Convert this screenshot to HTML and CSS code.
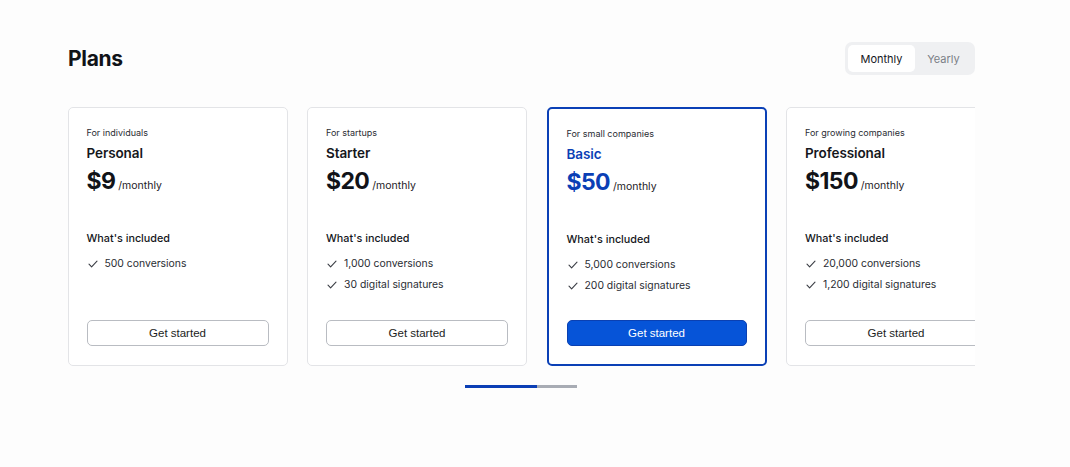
FILE: index.html
```html
<!DOCTYPE html>
<html lang="en">
<head>
<meta charset="utf-8">
<title>Plans</title>
<link rel="stylesheet" href="styles.css">
</head>
<body>
<main class="page">
  <header class="top">
    <h1 class="title">Plans</h1>
    <div class="toggle">
      <span class="seg seg-active">Monthly</span>
      <span class="seg">Yearly</span>
    </div>
  </header>

  <div class="carousel">
    <div class="track">
      <section class="card">
        <p class="tag">For individuals</p>
        <h2 class="name">Personal</h2>
        <p class="price"><span class="amount">$9</span> <span class="per">/monthly</span></p>
        <h3 class="incl">What's included</h3>
        <ul class="feats">
          <li><svg class="chk" viewBox="0 0 10 8"><polyline points="1,4.2 3.6,6.8 9,1.2"/></svg>500 conversions</li>
        </ul>
        <button class="btn">Get started</button>
      </section>

      <section class="card">
        <p class="tag">For startups</p>
        <h2 class="name">Starter</h2>
        <p class="price"><span class="amount">$20</span> <span class="per">/monthly</span></p>
        <h3 class="incl">What's included</h3>
        <ul class="feats">
          <li><svg class="chk" viewBox="0 0 10 8"><polyline points="1,4.2 3.6,6.8 9,1.2"/></svg>1,000 conversions</li>
          <li><svg class="chk" viewBox="0 0 10 8"><polyline points="1,4.2 3.6,6.8 9,1.2"/></svg>30 digital signatures</li>
        </ul>
        <button class="btn">Get started</button>
      </section>

      <section class="card card-featured">
        <p class="tag">For small companies</p>
        <h2 class="name">Basic</h2>
        <p class="price"><span class="amount">$50</span> <span class="per">/monthly</span></p>
        <h3 class="incl">What's included</h3>
        <ul class="feats">
          <li><svg class="chk" viewBox="0 0 10 8"><polyline points="1,4.2 3.6,6.8 9,1.2"/></svg>5,000 conversions</li>
          <li><svg class="chk" viewBox="0 0 10 8"><polyline points="1,4.2 3.6,6.8 9,1.2"/></svg>200 digital signatures</li>
        </ul>
        <button class="btn btn-primary">Get started</button>
      </section>

      <section class="card">
        <p class="tag">For growing companies</p>
        <h2 class="name">Professional</h2>
        <p class="price"><span class="amount">$150</span> <span class="per">/monthly</span></p>
        <h3 class="incl">What's included</h3>
        <ul class="feats">
          <li><svg class="chk" viewBox="0 0 10 8"><polyline points="1,4.2 3.6,6.8 9,1.2"/></svg>20,000 conversions</li>
          <li><svg class="chk" viewBox="0 0 10 8"><polyline points="1,4.2 3.6,6.8 9,1.2"/></svg>1,200 digital signatures</li>
        </ul>
        <button class="btn">Get started</button>
      </section>
    </div>
  </div>

  <div class="dots">
    <span class="bar bar-on"></span><span class="bar"></span>
  </div>
</main>
</body>
</html>
```

FILE: styles.css
```css
* { box-sizing: border-box; }

html, body {
  margin: 0;
  padding: 0;
  background: #fdfdfd;
}

body {
  font-family: "Inter", "Liberation Sans", sans-serif;
  color: #111318;
}

.page {
  width: 907.5px;
  margin-left: 67.5px;
  padding-top: 42px;
}

.top {
  display: flex;
  justify-content: space-between;
  align-items: center;
  height: 33px;
}

.title {
  margin: 0 0 0 0.5px;
  font-size: 21px;
  font-weight: 700;
  letter-spacing: -0.3px;
  line-height: 26px;
}

.toggle {
  display: flex;
  background: #eff0f2;
  border-radius: 7px;
  padding: 3px;
  height: 33px;
}

.seg {
  display: flex;
  align-items: center;
  justify-content: center;
  font-size: 11px;
  color: #7b7f87;
  width: 57px;
  border-radius: 5px;
}

.seg-active {
  width: 67px;
  background: #ffffff;
  color: #16181d;
}

.carousel {
  margin-top: 32px;
  overflow: hidden;
}

.track {
  display: flex;
  gap: 19.5px;
}

.card {
  flex: 0 0 220px;
  height: 259px;
  background: #ffffff;
  border: 1px solid #e3e4e7;
  border-radius: 5px;
  padding: 19px 18px 19px;
  display: flex;
  flex-direction: column;
}

.card-featured {
  border: 2px solid #0b40b6;
  padding: 19px 18px 18px 18px;
}

.tag {
  margin: 0;
  font-size: 9px;
  line-height: 12px;
  color: #2a2d33;
}

.name {
  margin: 5px 0 0;
  font-size: 13.5px;
  font-weight: 600;
  letter-spacing: -0.1px;
  line-height: 18px;
  color: #15171c;
}

.price {
  margin: 4px 0 0;
  line-height: 30px;
  display: flex;
  align-items: baseline;
}

.amount {
  font-size: 23px;
  font-weight: 700;
  letter-spacing: -0.6px;
}

.per {
  font-size: 10.5px;
  margin-left: 3px;
  color: #1d2026;
}

.card-featured .name,
.card-featured .amount {
  color: #0b3fb5;
}

.incl {
  margin: 30px 0 0;
  font-size: 10.8px;
  font-weight: 500;
  line-height: 16px;
  color: #15171c;
}

.feats {
  list-style: none;
  margin: 9px 0 0;
  padding: 0;
  display: flex;
  flex-direction: column;
  gap: 5px;
}

.feats li {
  display: flex;
  align-items: center;
  font-size: 10.4px;
  line-height: 16px;
  color: #2a2d33;
}

.chk {
  width: 10px;
  height: 8px;
  margin: 0 7px 0 1px;
  fill: none;
  stroke: #3a3d44;
  stroke-width: 1.1;
  stroke-linecap: round;
  stroke-linejoin: round;
}

.btn {
  margin-top: auto;
  height: 26px;
  width: 100%;
  border: 1px solid #b9bcc2;
  border-radius: 5px;
  background: #ffffff;
  font-family: "Liberation Sans", Arial, sans-serif;
  font-size: 11.5px;
  color: #1b1d22;
  padding: 0;
}

.btn-primary {
  background: #0654d8;
  border-color: #0a40b2;
  color: #ffffff;
}

.dots {
  display: flex;
  justify-content: center;
  margin-top: 19px;
}

.bar {
  width: 40px;
  height: 2.5px;
  background: #a8acb4;
}

.bar-on {
  width: 72px;
  background: #0b3fb5;
}
```
